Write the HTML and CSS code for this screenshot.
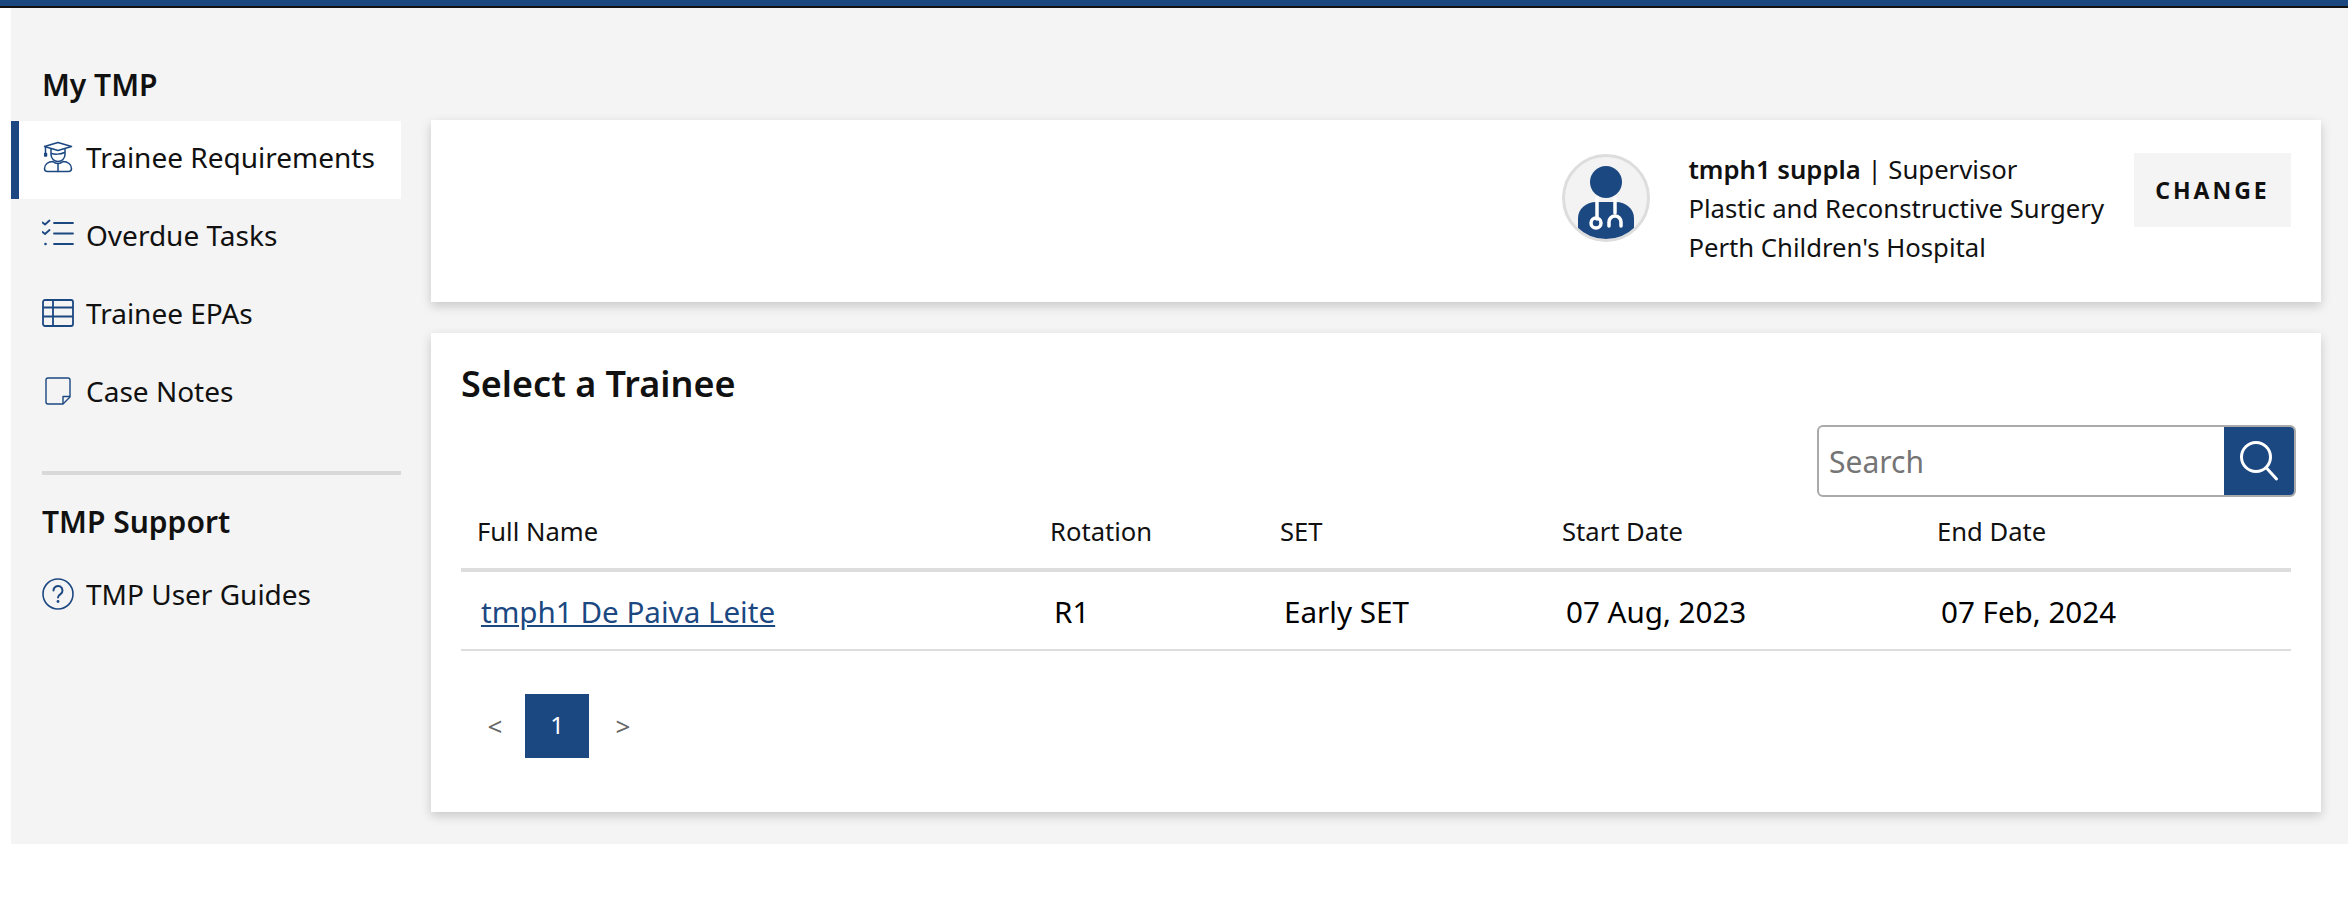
FILE: index.html
```html
<!DOCTYPE html>
<html lang="en">
<head>
  <meta charset="UTF-8" />
  <title>My TMP</title>
  <link rel="stylesheet" href="styles.css">
</head>
<body>
  <div class="topbar"></div>

  <div class="page">
    <nav class="sidebar">
      <h2 class="side-title">My TMP</h2>
      <a class="side-link active">
        <svg class="side-icon" viewBox="0 0 32 32" fill="none" stroke="#1c4882" stroke-width="1.5" stroke-linecap="round" stroke-linejoin="round">
          <path d="M16 1.5 29.5 5.5 16 9.500 2.500 5.500Z" />
          <path d="M3.500 6V12" />
          <path d="M2.700 12.500h1.800v2.500H2.700Z" fill="#1c4882" />
          <path d="M9 8v5.500a7 7 0 0 0 14 0V8" />
          <path d="M9.500 12.500c3 1 9 1 13-1" />
          <path d="M11 20.500c-5 0-8.500 3-8.500 7 0 2 1 3 3 3h21c2 0 3-1 3-3 0-4-3.500-7-8.500-7-1.500 1.500-3 2-5 2s-3.500-.5-5-2Z" />
          <path d="M16 23v7.500" />
        </svg>
        <span>Trainee Requirements</span>
      </a>
      <a class="side-link">
        <svg class="side-icon" viewBox="0 0 32 32" fill="none" stroke="#1c4882" stroke-width="1.8" stroke-linecap="round" stroke-linejoin="round">
          <path d="M.5 3.500 3 5.500 7.500 1.500" />
          <path d="M.5 13 3 15 7.500 11" />
          <circle cx="3.500" cy="25" r="1.300" fill="#1c4882" stroke="none" />
          <path d="M12 4H31M12 14.500H31M12 25H31" />
        </svg>
        <span>Overdue Tasks</span>
      </a>
      <a class="side-link">
        <svg class="side-icon" viewBox="0 0 32 32" fill="none" stroke="#1c4882" stroke-width="1.800" stroke-linejoin="round">
          <rect x="1" y="3" width="30" height="26" rx="2" />
          <path d="M1 10.500H31M1 19.500H31M11 3V29" />
        </svg>
        <span>Trainee EPAs</span>
      </a>
      <a class="side-link">
        <svg class="side-icon" viewBox="0 0 32 32" fill="none" stroke="#1c4882" stroke-width="1.400" stroke-linejoin="round">
          <path d="M6 3h20a2 2 0 0 1 2 2v17l-7 7H6a2 2 0 0 1-2-2V5a2 2 0 0 1 2-2Z" />
          <path d="M28 21.500h-7V29" />
        </svg>
        <span>Case Notes</span>
      </a>

      <hr class="side-rule" />

      <h2 class="side-title">TMP Support</h2>
      <a class="side-link">
        <svg class="side-icon" viewBox="0 0 32 32" fill="none" stroke="#1c4882" stroke-width="1.600" stroke-linecap="round">
          <circle cx="16" cy="16" r="15" />
          <path d="M11.500 12.500a4.500 4.500 0 1 1 7 3.700c-1.500 1-2.500 1.800-2.500 3.300" stroke-width="2" />
          <circle cx="16" cy="23.500" r="1.400" fill="#1c4882" stroke="none" />
        </svg>
        <span>TMP User Guides</span>
      </a>
    </nav>

    <main class="content">
      <section class="card profile">
        <svg class="avatar" viewBox="0 0 88 88">
          <defs>
            <clipPath id="avatar-clip"><circle cx="44" cy="44" r="41" /></clipPath>
          </defs>
          <circle cx="44" cy="44" r="42.500" fill="#f3f3f3" stroke="#ddd" stroke-width="3" />
          <circle cx="44" cy="28" r="16" fill="#1c4882" />
          <path d="M16 88V64c0-9 8-16 18-16h20c10 0 18 7 18 16v24Z" fill="#1c4882" clip-path="url(#avatar-clip)" />
          <g fill="none" stroke="#fff" stroke-width="3.500" stroke-linecap="round">
            <path d="M35 44v21" />
            <circle cx="34" cy="69" r="5" />
            <path d="M53 44v15" />
            <path d="M47 72v-4a6 6 0 0 1 12 0v4" />
          </g>
        </svg>
        <div class="profile-text">
          <div><b>tmph1 suppla</b> | Supervisor</div>
          <div>Plastic and Reconstructive Surgery</div>
          <div>Perth Children's Hospital</div>
        </div>
        <button class="change-btn">CHANGE</button>
      </section>

      <section class="card trainees">
        <h1 class="card-title">Select a Trainee</h1>
        <div class="search-row">
          <div class="search">
            <span class="search-input">Search</span>
            <span class="search-btn">
              <svg viewBox="0 0 42 42" width="42" height="42" fill="none" stroke="#fff" stroke-width="3" stroke-linecap="round">
                <circle cx="18" cy="17" r="14.500" />
                <path d="M28.500 28 38.500 39" />
              </svg>
            </span>
          </div>
        </div>

        <table class="grid">
          <thead>
            <tr>
              <th class="col-name">Full Name</th>
              <th class="col-rot">Rotation</th>
              <th class="col-set">SET</th>
              <th class="col-start">Start Date</th>
              <th>End Date</th>
            </tr>
          </thead>
          <tbody>
            <tr>
              <td><a class="trainee-link">tmph1 De Paiva Leite</a></td>
              <td>R1</td>
              <td>Early SET</td>
              <td>07 Aug, 2023</td>
              <td>07 Feb, 2024</td>
            </tr>
          </tbody>
        </table>

        <div class="pager">
          <span class="pager-arrow prev">&lt;</span>
          <span class="pager-num">1</span>
          <span class="pager-arrow next">&gt;</span>
        </div>
      </section>
    </main>
  </div>
</body>
</html>
```

FILE: styles.css
```css
body {
  margin: 0;
  background: #fff;
  color: #111;
  font-family: "Noto Sans", "Open Sans", sans-serif;
}

.topbar {
  height: 6px;
  background: #1c4882;
  border-bottom: 2px solid #111;
}

.page {
  display: flex;
  height: 836px;
  margin-left: 11px;
  background: #f4f4f4;
}

/* sidebar */
.sidebar {
  width: 390px;
  padding-top: 53px;
  flex-shrink: 0;
}

.side-title {
  margin: 0 0 0 31px;
  height: 60px;
  font-size: 30px;
  font-weight: 600;
  line-height: 48px;
}

.side-link {
  display: flex;
  align-items: center;
  gap: 12px;
  height: 78px;
  box-sizing: border-box;
  padding-left: 31px;
  padding-bottom: 7px;
  font-size: 28px;
  color: #111;
}

.side-link.active {
  background: #fff;
  border-left: 8px solid #1c4882;
  padding-left: 23px;
}

.side-icon {
  width: 32px;
  height: 32px;
  flex-shrink: 0;
}

.side-rule {
  height: 4px;
  margin: 38px 0 23px 31px;
  border: 0;
  background: #d9d9d9;
}

/* cards */
.content {
  width: 1890px;
  margin-left: 30px;
  padding-top: 112px;
}

.card {
  background: #fff;
  box-shadow: 0 4px 10px rgba(0, 0, 0, 0.18);
}

.profile {
  display: flex;
  align-items: flex-start;
  justify-content: flex-end;
  height: 182px;
  padding-top: 30px;
  padding-right: 30px;
  box-sizing: border-box;
}

.avatar {
  width: 88px;
  height: 88px;
  margin-top: 4px;
  margin-right: 38px;
}

.profile-text {
  font-size: 25.7px;
  line-height: 39px;
  margin-right: 30px;
}

.profile-text b {
  font-weight: 600;
}

.change-btn {
  width: 157px;
  height: 74px;
  margin-top: 3px;
  border: 0;
  background: #f4f4f4;
  color: #111;
  font-family: inherit;
  font-size: 23px;
  font-weight: 700;
  letter-spacing: 3px;
}

.trainees {
  margin-top: 31px;
  height: 479px;
  padding: 0 30px;
  box-sizing: border-box;
}

.card-title {
  margin: 0;
  padding-top: 26px;
  font-size: 36px;
  font-weight: 600;
  line-height: 50px;
}

.search-row {
  display: flex;
  justify-content: flex-end;
  margin-top: 16px;
  margin-right: -5px;
}

.search {
  display: flex;
  width: 479px;
  height: 72px;
  box-sizing: border-box;
  border: 2px solid #aaa;
  border-radius: 6px;
  overflow: hidden;
}

.search-input {
  flex: 1;
  padding-left: 10px;
  font-size: 30px;
  line-height: 69px;
  color: #757575;
}

.search-btn {
  display: flex;
  align-items: center;
  justify-content: center;
  width: 70px;
  background: #1c4882;
}

/* table */
.grid {
  width: 100%;
  table-layout: fixed;
  border-collapse: collapse;
}

.grid th {
  box-sizing: border-box;
  height: 73px;
  padding: 0 0 3px 16px;
  font-size: 25.6px;
  font-weight: 400;
  text-align: left;
  border-bottom: 4px solid #ddd;
}

.grid td {
  height: 80px;
  padding: 1px 0 0 20px;
  box-sizing: border-box;
  font-size: 29.6px;
  color: #000;
  border-bottom: 2px solid #ddd;
}

.col-name { width: 573px; }
.col-rot { width: 230px; }
.col-set { width: 282px; }
.col-start { width: 375px; }

.trainee-link {
  color: #1c4882;
  text-decoration: underline;
}

/* pager */
.pager {
  display: flex;
  align-items: center;
  margin-top: 43px;
  margin-left: 11px;
}

.pager-arrow {
  width: 46px;
  text-align: center;
  font-size: 26px;
  color: #666;
}

.pager-arrow.prev { margin-right: 7px; }
.pager-arrow.next { margin-left: 11px; }

.pager-num {
  width: 64px;
  height: 64px;
  background: #1c4882;
  color: #fff;
  font-size: 24px;
  line-height: 62px;
  text-align: center;
}
```
